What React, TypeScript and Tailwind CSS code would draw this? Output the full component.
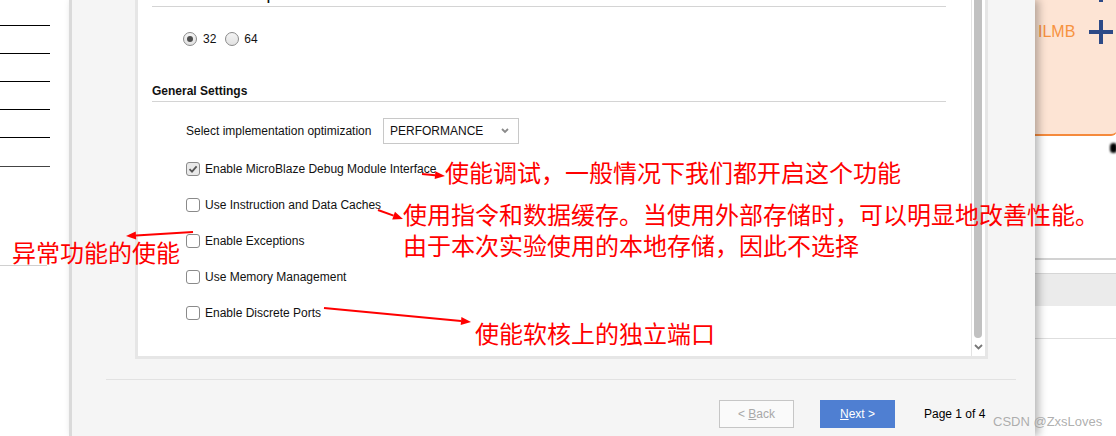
import React from 'react'

const RED = '#ff0000'

function Arrow({ x1, y1, x2, y2 }: { x1: number; y1: number; x2: number; y2: number }) {
  const dx = x2 - x1
  const dy = y2 - y1
  const len = Math.hypot(dx, dy)
  const ux = dx / len
  const uy = dy / len
  const hl = 10
  const hw = 4
  const bx = x2 - ux * hl
  const by = y2 - uy * hl
  const px = -uy
  const py = ux
  return (
    <g>
      <line x1={x1} y1={y1} x2={bx} y2={by} stroke={RED} strokeWidth={2} />
      <polygon
        points={`${x2},${y2} ${bx + px * hw},${by + py * hw} ${bx - px * hw},${by - py * hw}`}
        fill={RED}
      />
    </g>
  )
}

function Radio({ checked }: { checked?: boolean }) {
  return (
    <span className="w-[14px] h-[14px] rounded-full border border-[#8a8a8a] bg-gradient-to-b from-[#f4f4f4] to-[#e2e2e2] flex items-center justify-center">
      {checked && <span className="w-[6px] h-[6px] rounded-full bg-[#4d4d4d]" />}
    </span>
  )
}

function Check({ checked }: { checked?: boolean }) {
  return (
    <span
      className={`w-[14px] h-[14px] rounded-[3px] border border-[#8a8a8a] flex items-center justify-center ${
        checked ? 'bg-[#e9e9e9]' : 'bg-white'
      }`}
    >
      {checked && (
        <svg width="10" height="10" viewBox="0 0 10 10">
          <path d="M1.5 5.2 L4 7.6 L8.6 2.4" fill="none" stroke="#555" strokeWidth="1.8" />
        </svg>
      )}
    </span>
  )
}

const OPTIONS = [
  { label: 'Enable MicroBlaze Debug Module Interface', checked: true },
  { label: 'Use Instruction and Data Caches' },
  { label: 'Enable Exceptions' },
  { label: 'Use Memory Management' },
  { label: 'Enable Discrete Ports' },
]

export default function App() {
  return (
    <div className="relative w-[1116px] h-[436px] overflow-hidden bg-white flex font-['Liberation_Sans',Arial,sans-serif] text-[12px] text-[#111]">
      {/* left window behind the dialog */}
      <div className="w-[69px] shrink-0 flex flex-col">
        <div className="mt-[25px] h-px w-[50px] bg-black" />
        <div className="mt-[27px] h-px w-[50px] bg-black" />
        <div className="mt-[27px] h-px w-[50px] bg-black" />
        <div className="mt-[27px] h-px w-[50px] bg-black" />
        <div className="mt-[27px] h-px w-[50px] bg-black" />
        <div className="mt-[28px] h-px w-[50px] bg-[#444]" />
        <div className="mt-[98px] h-px w-[47px] bg-[#d0d0d0]" />
      </div>

      {/* dialog */}
      <div className="relative z-10 w-[966px] shrink-0 h-full border-l-[3px] border-[#dadada] bg-[#f5f5f5] flex flex-col shadow-[4px_0_8px_rgba(0,0,0,0.28)]">
        <div className="pl-[63px]">
          <div className="mt-[-23px] w-[853px] h-[382px] border-[3px] border-[#e6e6e6] bg-white flex">
            <div className="flex-1 pl-[14px] pr-[25px]">
              <div className="pt-[9px] pb-[2px] border-b border-[#d4d4d4] font-bold leading-[15px]">
                Select Processor Implementation
              </div>
              <div className="mt-[24px] ml-[31px] h-[16px] flex items-center">
                <Radio checked />
                <span className="ml-[6px]">32</span>
                <span className="ml-[9px]">
                  <Radio />
                </span>
                <span className="ml-[5px]">64</span>
              </div>

              <div className="mt-[37px] pb-[2px] border-b border-[#d4d4d4] font-bold leading-[15px]">
                General Settings
              </div>
              <div className="mt-[16px] ml-[34px] h-[26px] flex items-center">
                <span className="w-[197px]">Select implementation optimization</span>
                <div className="w-[136px] h-[26px] border border-[#c8c8c8] bg-white flex items-center pl-[6px] pr-[9px]">
                  <span className="flex-1">PERFORMANCE</span>
                  <svg width="8" height="6" viewBox="0 0 8 6">
                    <path d="M1 1 L4 4 L7 1" fill="none" stroke="#8a8a8a" strokeWidth="1.8" />
                  </svg>
                </div>
              </div>

              <div className="mt-[17px] ml-[34px] flex flex-col gap-[20px]">
                {OPTIONS.map((o) => (
                  <div key={o.label} className="h-[16px] flex items-center">
                    <Check checked={o.checked} />
                    <span className="ml-[5px]">{o.label}</span>
                  </div>
                ))}
              </div>
            </div>

            {/* scrollbar */}
            <div className="w-[14px] border-l border-[#e3e3e3] flex flex-col">
              <div className="ml-[2px] w-[8px] h-[358px] rounded-b-full bg-[#c1c1c1]" />
              <div className="flex-1 flex items-center justify-center pr-[1px]">
                <svg width="9" height="6" viewBox="0 0 9 6">
                  <path d="M1 1 L4.5 4.5 L8 1" fill="none" stroke="#777" strokeWidth="1.8" />
                </svg>
              </div>
            </div>
          </div>
        </div>

        <div className="mt-[20px] ml-[34px] w-[910px] h-px bg-[#e2e2e2]" />

        <div className="mt-[20px] pl-[647px] flex items-center">
          <button className="w-[75px] h-[28px] border border-[#c6c6c6] bg-[#fafafa] text-[#a8a8a8]">
            &lt; <span className="underline">B</span>ack
          </button>
          <button className="ml-[26px] w-[75px] h-[28px] bg-[#4f7fd2] text-white">
            <span className="underline">N</span>ext &gt;
          </button>
          <span className="ml-[29px] text-black">Page 1 of 4</span>
        </div>
      </div>

      {/* right canvas behind the dialog */}
      <div className="flex-1 flex flex-col">
        <div className="h-[136px] bg-[#fde4d4] border-b-2 border-[#f58a3c] rounded-br-[6px] flex flex-col">
          <div className="ml-[64px] w-[4px] h-[2px] bg-[#2d4a87]" />
          <div className="mt-[18px] pl-[3px] flex items-center">
            <span className="text-[16px] leading-[20px] text-[#f7923f]">ILMB</span>
            <svg className="ml-[14px]" width="24" height="24" viewBox="0 0 24 24">
              <path d="M12 0 V24 M0 12 H24" stroke="#2d4a87" strokeWidth="4" />
            </svg>
          </div>
        </div>
        <div className="mt-[7px] ml-[75px] w-[7px] h-[10px] rounded-full bg-black blur-[1px]" />
        <div className="mt-[105px] h-[2px] bg-[#d2d2d2]" />
        <div className="mt-[13px] h-px bg-[#d6d6d6]" />
        <div className="h-[32px] bg-[#ebebeb]" />
        <div className="mt-[32px] h-px bg-[#dedede]" />
      </div>

      {/* annotations */}
      <svg className="absolute inset-0 pointer-events-none z-20" width="1116" height="436">
        <Arrow x1={422} y1={174} x2={445} y2={176} />
        <Arrow x1={378} y1={210} x2={403} y2={219} />
        <Arrow x1={193} y1={232} x2={126} y2={236} />
        <Arrow x1={324} y1={308} x2={471} y2={322} />
      </svg>
      <span className="absolute z-20 left-[445px] top-[160px] whitespace-nowrap text-[24px] leading-none text-[#ff0000] font-['Noto_Sans_CJK_SC',sans-serif]">
        使能调试，一般情况下我们都开启这个功能
      </span>
      <span className="absolute z-20 left-[403px] top-[202px] whitespace-nowrap text-[24px] leading-none text-[#ff0000] font-['Noto_Sans_CJK_SC',sans-serif]">
        使用指令和数据缓存。当使用外部存储时，可以明显地改善性能。
      </span>
      <span className="absolute z-20 left-[403px] top-[233px] whitespace-nowrap text-[24px] leading-none text-[#ff0000] font-['Noto_Sans_CJK_SC',sans-serif]">
        由于本次实验使用的本地存储，因此不选择
      </span>
      <span className="absolute z-20 left-[12px] top-[240px] whitespace-nowrap text-[24px] leading-none text-[#ff0000] font-['Noto_Sans_CJK_SC',sans-serif]">
        异常功能的使能
      </span>
      <span className="absolute z-20 left-[475px] top-[321px] whitespace-nowrap text-[24px] leading-none text-[#ff0000] font-['Noto_Sans_CJK_SC',sans-serif]">
        使能软核上的独立端口
      </span>
      <span className="absolute z-20 left-[993px] top-[414px] whitespace-nowrap text-[13px] leading-[15px] text-[#9a9a9a]/80 font-['Liberation_Sans',Arial,sans-serif]">
        CSDN @ZxsLoves
      </span>
    </div>
  )
}
